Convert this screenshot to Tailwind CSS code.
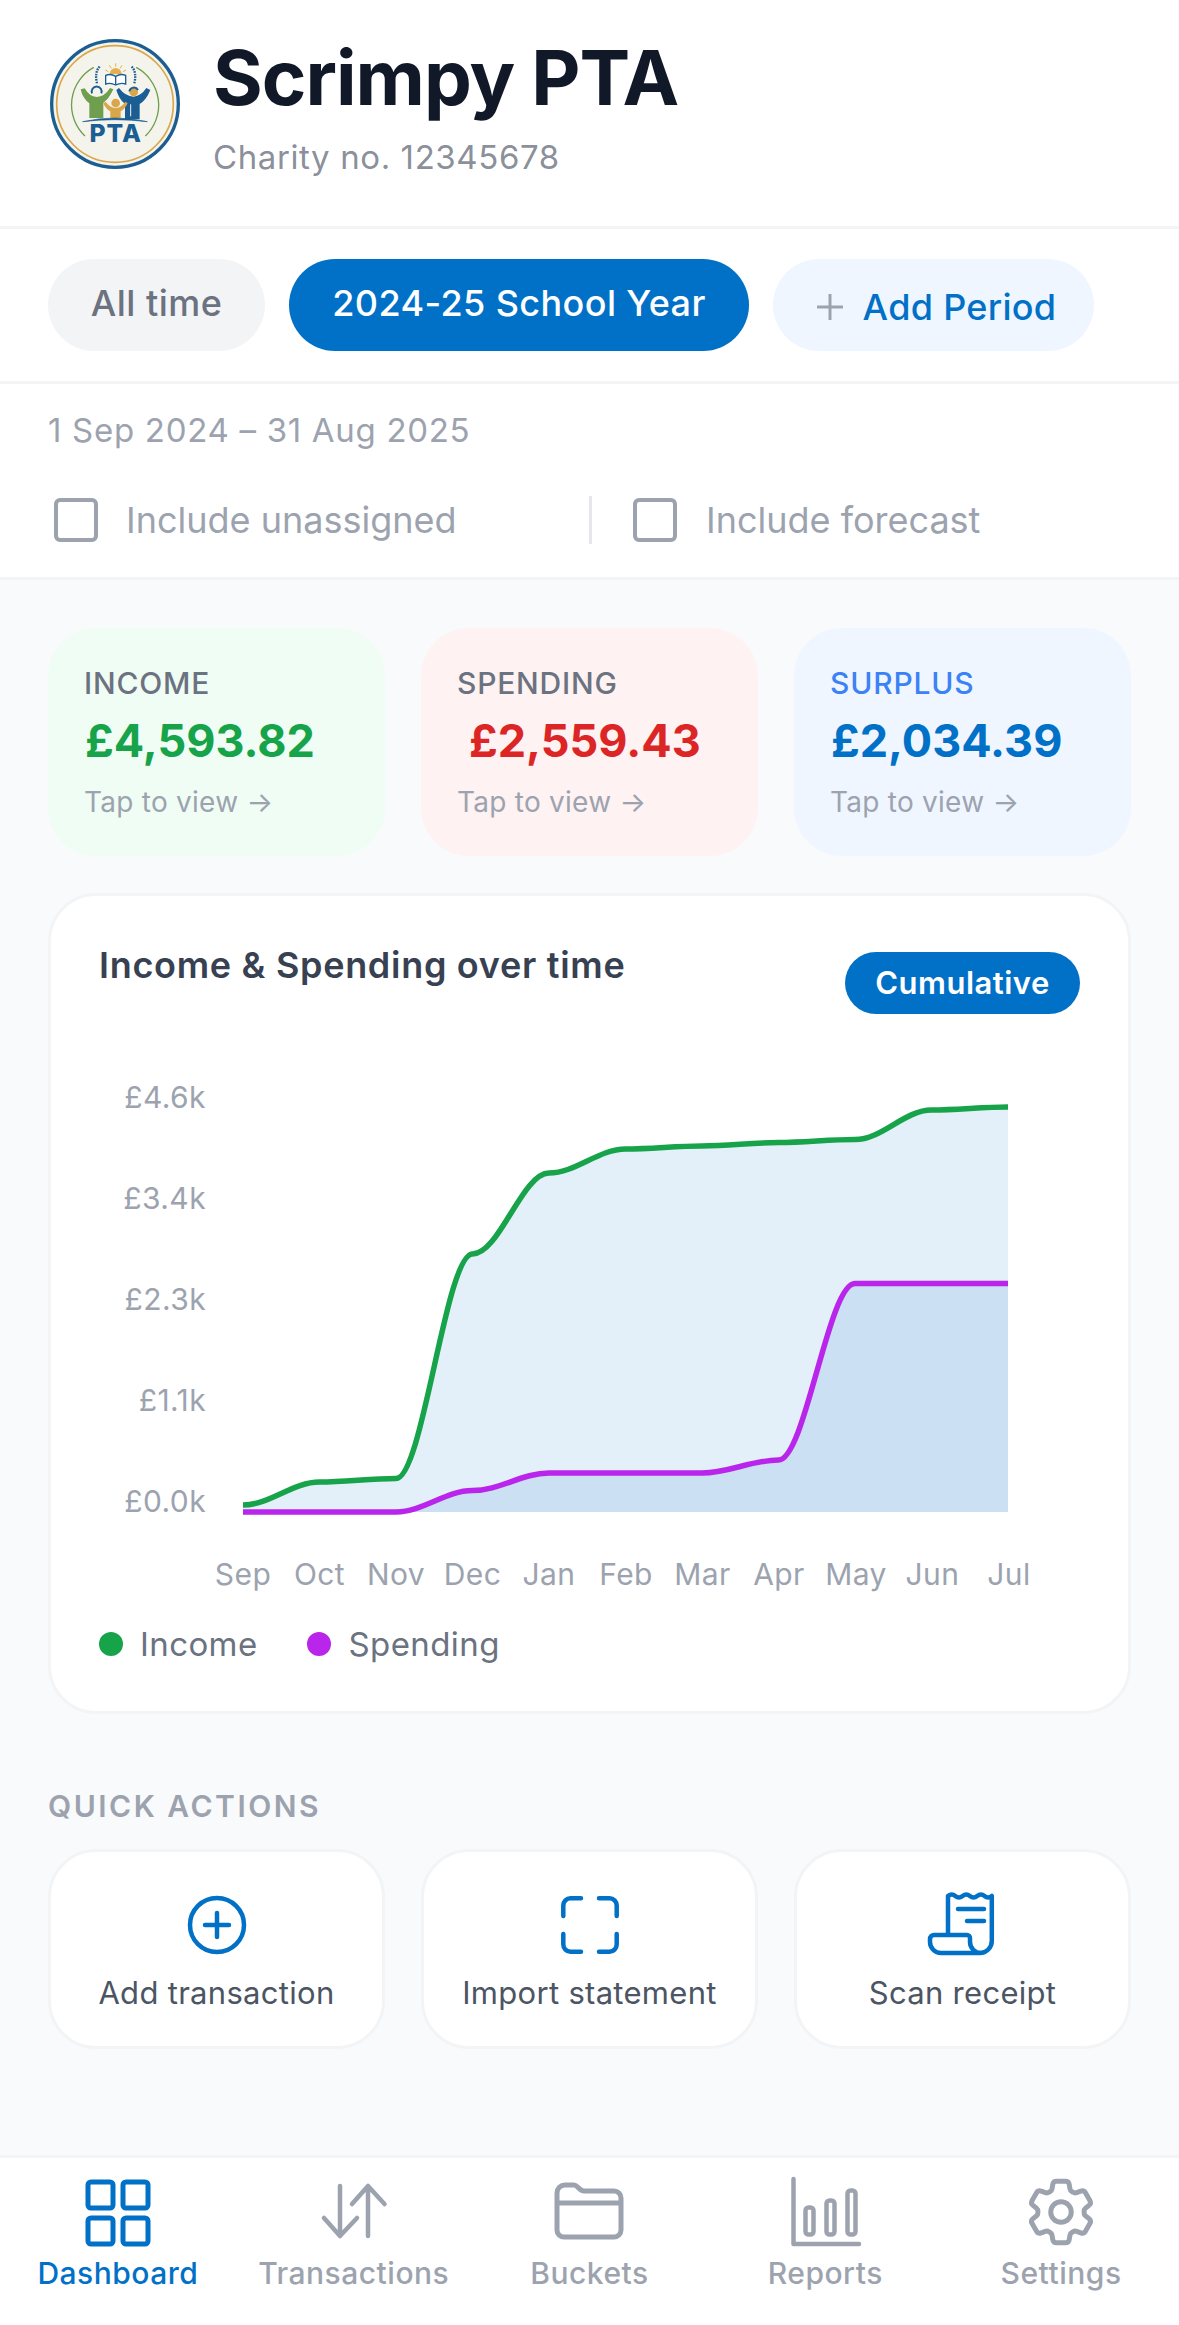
<!DOCTYPE html>
<html lang="en">
<head>
  <meta charset="UTF-8" />
  <meta name="viewport" content="width=device-width, initial-scale=1.0"/>
  <title>Dashboard | Scrimpy PTA</title>
  <script src="https://cdn.jsdelivr.net/npm/@tailwindcss/browser@4"></script>
</head>
<body class="bg-white font-[Inter,sans-serif]">
<div class="w-[1179px] h-[2325px] flex flex-col overflow-hidden bg-[#f9fafb]">

  <!-- header -->
  <header class="h-[229px] shrink-0 bg-white border-b-[3px] border-[#f3f4f6] pl-[50px] pt-[39px] flex items-start gap-[33px]">
    <svg class="w-[130px] h-[130px] shrink-0" viewBox="60 55 390 390">
      <circle cx="255" cy="250" r="190" fill="#f5f4ec" stroke="#1b5e93" stroke-width="10"/>
      <circle cx="255" cy="250" r="175" fill="none" stroke="#d9a74a" stroke-width="5"/>
      <path d="M190 141A128 128 0 0 0 164 345M320 141A128 128 0 0 1 347 345" fill="none" stroke="#6f9e4f" stroke-width="4" stroke-linecap="round"/>
      <path d="M239 160a18 18 0 0 1 36 0Z" fill="#e3b04f"/>
      <path d="M257 128v10M238 134l6 9M276 134l-6 9M226 148l9 5M288 148l-9 5" stroke="#e3b04f" stroke-width="3"/>
      <path d="M227 164q15-6 30 3q15-9 30-3v26q-15-5-30 3q-15-8-30-3ZM257 167v26" fill="#fff" stroke="#1b5e93" stroke-width="4"/>
      <path d="M209 138q-16 16-8 50M305 138q16 16 8 50" fill="none" stroke="#1b5e93" stroke-width="7" stroke-dasharray="5 3"/>
      <path d="M152 206l12-3q14 25 36 26q24-1 40-27l10 4q-14 30-30 40v46h-42v-44q-20-14-26-42Z" fill="#6f9e4f"/>
      <path d="M186 218a15 15 0 1 1 28 0" fill="none" stroke="#1b5e93" stroke-width="6"/>
      <path d="M259 208l8-6q20 26 44 26q22-2 38-26l12 6q-12 30-32 42v46h-44v-46q-18-14-26-42Z" fill="#1b5e93"/>
      <path d="M302 287v-36" stroke="#f5f4ec" stroke-width="3"/>
      <circle cx="311" cy="214" r="13" fill="#d9a74a"/>
      <path d="M298 212a14 14 0 0 1 26-4" fill="none" stroke="#1b5e93" stroke-width="6"/>
      <circle cx="257" cy="247" r="13" fill="#d9a74a"/>
      <path d="M220 248l7-5q12 18 30 19q18-1 29-19l7 5q-9 18-21 24v20h-31v-20q-14-7-21-24Z" fill="#d9a74a"/>
      <path d="M158 303q97-22 194 0q-97-12-194 0Z" fill="#1b5e93" stroke="#1b5e93" stroke-width="2"/>
      <text x="257" y="365" text-anchor="middle" font-family="Inter" font-weight="800" font-size="74" letter-spacing="3" fill="#1b5e93">PTA</text>
    </svg>
    <div class="flex flex-col">
      <h1 class="text-[76px] leading-[78px] font-bold tracking-[-1px] text-[#111827] mt-[-1px]">Scrimpy PTA</h1>
      <p class="text-[33px] leading-[40px] mt-[21px] text-[#6b7280]/80 tracking-[0.6px]">Charity no. 12345678</p>
    </div>
  </header>

  <!-- period pills -->
  <div class="h-[155px] shrink-0 bg-white border-b-[3px] border-[#f3f4f6] px-[48px] pt-[30px] flex items-start gap-[24px]">
    <button class="h-[92px] w-[217px] pb-[4px] rounded-full bg-[#f3f4f6] text-[36px] font-medium tracking-[0.5px] text-[#6b7280]">All time</button>
    <button class="h-[92px] w-[460px] pb-[4px] rounded-full bg-[#0170c7] text-[36px] font-medium tracking-[0.4px] text-white">2024-25 School Year</button>
    <button class="h-[92px] w-[321px] pl-[6px] rounded-full bg-[#eff6ff] text-[36px] font-medium tracking-[0.3px] text-[#0170c7] flex items-center justify-center gap-[20px] pt-[3px]">
      <svg class="w-[26px] h-[26px]" viewBox="0 0 26 26" fill="none" stroke="#9ca3af" stroke-width="3"><path d="M13 0v26M0 13h26"/></svg>
      Add Period
    </button>
  </div>

  <!-- date range + toggles -->
  <div class="h-[196px] shrink-0 bg-white border-b-[3px] border-[#f3f4f6] px-[48px]">
    <p class="text-[33px] leading-[40px] mt-[26px] text-[#9ca3af] tracking-[0.7px]">1 Sep 2024 – 31 Aug 2025</p>
    <div class="flex items-center mt-[43px]">
      <label class="w-[541px] flex items-center gap-[28px] pl-[6px] text-[36px] text-[#9ca3af]">
        <span class="w-[44px] h-[44px] rounded-[6px] border-[4px] border-[#9ca3af] bg-white"></span>
        Include unassigned
      </label>
      <span class="w-[3px] h-[48px] bg-[#e5e7eb]"></span>
      <label class="flex items-center gap-[29px] pl-[41px] text-[36px] text-[#9ca3af]">
        <span class="w-[44px] h-[44px] rounded-[6px] border-[4px] border-[#9ca3af] bg-white"></span>
        Include forecast
      </label>
    </div>
  </div>

  <main class="flex-1 px-[48px] pt-[48px]">
    <!-- summary cards -->
    <div class="grid grid-cols-3 gap-[36px]">
      <div class="h-[228px] rounded-[48px] bg-[#f0fdf4] pl-[36px] pt-[37px]">
        <p class="text-[30px] leading-[36px] font-medium tracking-[0.8px] text-[#6b7280]">INCOME</p>
        <p class="text-[45px] leading-[60px] font-bold text-[#16a34a] mt-[10px] ml-[1px]">£4,593.82</p>
        <p class="text-[28px] leading-[36px] tracking-[0.25px] text-[#9ca3af] mt-[13px]">Tap to view →</p>
      </div>
      <div class="h-[228px] rounded-[48px] bg-[#fef2f2] pl-[36px] pt-[37px]">
        <p class="text-[30px] leading-[36px] font-medium tracking-[0.8px] text-[#6b7280]">SPENDING</p>
        <p class="text-[45px] leading-[60px] font-bold text-[#dc2626] mt-[10px] ml-[12px]">£2,559.43</p>
        <p class="text-[28px] leading-[36px] tracking-[0.25px] text-[#9ca3af] mt-[13px]">Tap to view →</p>
      </div>
      <div class="h-[228px] rounded-[48px] bg-[#eff6ff] pl-[36px] pt-[37px]">
        <p class="text-[30px] leading-[36px] font-medium tracking-[0.8px] text-[#3b82f6]">SURPLUS</p>
        <p class="text-[45px] leading-[60px] font-bold text-[#0170c7] mt-[10px] ml-[1px]">£2,034.39</p>
        <p class="text-[28px] leading-[36px] tracking-[0.25px] text-[#9ca3af] mt-[13px]">Tap to view →</p>
      </div>
    </div>

    <!-- chart -->
    <section class="h-[821px] mt-[37px] rounded-[48px] bg-white border-[3px] border-[#f3f4f6] pt-[48px]">
      <div class="flex items-start justify-between pl-[48px] pr-[48px]">
        <h2 class="text-[36px] leading-[42px] font-semibold tracking-[0.7px] text-[#374151]">Income &amp; Spending over time</h2>
        <span class="mt-[8px] h-[62px] w-[235px] rounded-full bg-[#0170c7] text-white text-[31px] font-semibold tracking-[0.5px] flex items-center justify-center">Cumulative</span>
      </div>
      <svg class="block mt-[26px]" width="1077" height="570" viewBox="51 1040 1077 570" font-family="Inter" font-size="30" letter-spacing="0.4" fill="#9ca3af">
        <path id="income-fill" fill="#0170c7" fill-opacity="0.11"/>
        <path id="spending-fill" fill="#0170c7" fill-opacity="0.1"/>
        <path id="income-line" fill="none" stroke="#16a34a" stroke-width="5.5"/>
        <path id="spending-line" fill="none" stroke="#b925ea" stroke-width="5.5"/>
        <g text-anchor="end">
          <text x="206" y="1108">£4.6k</text>
          <text x="206" y="1209">£3.4k</text>
          <text x="206" y="1310">£2.3k</text>
          <text x="206" y="1411">£1.1k</text>
          <text x="206" y="1512">£0.0k</text>
        </g>
        <g text-anchor="middle">
          <text x="243" y="1585">Sep</text>
          <text x="319.5" y="1585">Oct</text>
          <text x="396" y="1585">Nov</text>
          <text x="472.5" y="1585">Dec</text>
          <text x="549" y="1585">Jan</text>
          <text x="626" y="1585">Feb</text>
          <text x="702.5" y="1585">Mar</text>
          <text x="779" y="1585">Apr</text>
          <text x="856" y="1585">May</text>
          <text x="932.5" y="1585">Jun</text>
          <text x="1009" y="1585">Jul</text>
        </g>
      </svg>
      <div class="flex items-center mt-[14px] pl-[48px] text-[33px] leading-[40px] tracking-[0.4px] text-[#6b7280]">
        <span class="w-[24px] h-[24px] rounded-full bg-[#16a34a]"></span>
        <span class="ml-[17px]">Income</span>
        <span class="w-[24px] h-[24px] rounded-full bg-[#b925ea] ml-[49px]"></span>
        <span class="ml-[18px]">Spending</span>
      </div>
    </section>

    <!-- quick actions -->
    <h3 class="text-[30px] leading-[36px] font-semibold tracking-[2.5px] text-[#9ca3af] mt-[74px]">QUICK ACTIONS</h3>
    <div class="grid grid-cols-3 gap-[36px] mt-[25px]">
      <button class="h-[200px] rounded-[48px] bg-white border-[3px] border-[#f3f4f6] flex flex-col items-center pt-[37px]">
        <svg class="w-[72px] h-[72px]" viewBox="0 0 24 24" fill="none" stroke="#0170c7" stroke-width="1.5" stroke-linecap="round"><circle cx="12" cy="12" r="9"/><path d="M12 8v8M8 12h8"/></svg>
        <span class="text-[31px] leading-[40px] tracking-[0.3px] text-[#4b5563] mt-[12px]">Add transaction</span>
      </button>
      <button class="h-[200px] rounded-[48px] bg-white border-[3px] border-[#f3f4f6] flex flex-col items-center pt-[37px]">
        <svg class="w-[72px] h-[72px]" viewBox="0 0 24 24" fill="none" stroke="#0170c7" stroke-width="1.5" stroke-linecap="round"><path d="M9 3.1H5.5A2.4 2.4 0 0 0 3.1 5.5V9M15 3.1h3.5a2.4 2.4 0 0 1 2.4 2.4V9M20.9 15v3.5a2.4 2.4 0 0 1-2.4 2.4H15M9 20.9H5.5a2.4 2.4 0 0 1-2.4-2.4V15"/></svg>
        <span class="text-[31px] leading-[40px] tracking-[0.3px] text-[#4b5563] mt-[12px]">Import statement</span>
      </button>
      <button class="h-[200px] rounded-[48px] bg-white border-[3px] border-[#f3f4f6] flex flex-col items-center pt-[37px]">
        <svg class="w-[72px] h-[72px]" viewBox="0 0 72 72" fill="none" stroke="#0170c7" stroke-width="4.5" stroke-linecap="round" stroke-linejoin="round"><path d="M21 46V7q3.7-3 7.3 0t7.3 0t7.3 0t7.3 0t7.3 0t7.3 0V52a12 12 0 0 1-12 12H14A11 11 0 0 1 3 53V50a4 4 0 0 1 4-4H40a3 3 0 0 1 3 3V53a11 11 0 0 0 11 11M31 20H57M40 32H57"/></svg>
        <span class="text-[31px] leading-[40px] tracking-[0.3px] text-[#4b5563] mt-[12px]">Scan receipt</span>
      </button>
    </div>
  </main>

  <!-- bottom nav -->
  <nav class="h-[170px] shrink-0 bg-white border-t-[3px] border-[#f3f4f6] grid grid-cols-5 text-[30px] leading-[36px] font-medium tracking-[0.5px] text-[#9ca3af]">
    <a class="flex flex-col items-center pt-[15px] text-[#0170c7]">
      <svg class="w-[78px] h-[78px]" viewBox="0 0 78 78" fill="none" stroke="#0170c7" stroke-width="5"><rect x="9" y="9" width="25" height="26" rx="3"/><rect x="44" y="9" width="25" height="26" rx="3"/><rect x="9" y="45" width="25" height="26" rx="3"/><rect x="44" y="45" width="25" height="26" rx="3"/></svg>
      <span class="mt-[4px]">Dashboard</span>
    </a>
    <a class="flex flex-col items-center pt-[15px]">
      <svg class="w-[78px] h-[78px]" viewBox="0 0 78 78" fill="none" stroke="#9ca3af" stroke-width="4.5" stroke-linecap="round" stroke-linejoin="round"><path d="M25 13V63M9 45L25 63L42 45M53 63V13M37 31L53 13L69.5 31"/></svg>
      <span class="mt-[4px]">Transactions</span>
    </a>
    <a class="flex flex-col items-center pt-[15px]">
      <svg class="w-[78px] h-[78px]" viewBox="0 0 78 78" fill="none" stroke="#9ca3af" stroke-width="5"><path d="M7 20a8 8 0 0 1 8-8H24c4 0 5 6 10 6H64a7 7 0 0 1 7 7V57a7 7 0 0 1-7 7H14a7 7 0 0 1-7-7ZM7 30H71"/></svg>
      <span class="mt-[4px]">Buckets</span>
    </a>
    <a class="flex flex-col items-center pt-[15px]">
      <svg class="w-[78px] h-[78px]" viewBox="0 0 78 78" fill="none" stroke="#9ca3af" stroke-width="4.5" stroke-linecap="round" stroke-linejoin="round"><path d="M7.5 6V71H73"/><rect x="19.5" y="34.5" width="8" height="27" rx="3"/><rect x="40.5" y="27.5" width="8" height="34" rx="3"/><rect x="61.5" y="17.5" width="8" height="44" rx="3"/></svg>
      <span class="mt-[4px]">Reports</span>
    </a>
    <a class="flex flex-col items-center pt-[15px]">
      <svg class="w-[78px] h-[78px]" viewBox="0.6 0.6 22.8 22.8" fill="none" stroke="#9ca3af" stroke-width="1.45" stroke-linecap="round" stroke-linejoin="round"><path d="M9.594 3.94c.09-.542.56-.94 1.11-.94h2.593c.55 0 1.02.398 1.11.94l.213 1.281c.063.374.313.686.645.87.074.04.147.083.22.127.325.196.72.257 1.075.124l1.217-.456a1.125 1.125 0 0 1 1.37.49l1.296 2.247a1.125 1.125 0 0 1-.26 1.431l-1.003.827c-.293.241-.438.613-.43.992a7.723 7.723 0 0 1 0 .255c-.008.378.137.75.43.991l1.004.827c.424.35.534.955.26 1.43l-1.298 2.247a1.125 1.125 0 0 1-1.369.491l-1.217-.456c-.355-.133-.75-.072-1.076.124a6.47 6.47 0 0 1-.22.128c-.331.183-.581.495-.644.869l-.213 1.281c-.09.543-.56.94-1.11.94h-2.594c-.55 0-1.019-.398-1.11-.94l-.213-1.281c-.062-.374-.312-.686-.644-.87a6.52 6.52 0 0 1-.22-.127c-.325-.196-.72-.257-1.076-.124l-1.217.456a1.125 1.125 0 0 1-1.369-.49l-1.297-2.247a1.125 1.125 0 0 1 .26-1.431l1.004-.827c.292-.24.437-.613.43-.991a6.932 6.932 0 0 1 0-.255c.007-.38-.138-.751-.43-.992l-1.004-.827a1.125 1.125 0 0 1-.26-1.43l1.297-2.247a1.125 1.125 0 0 1 1.37-.491l1.216.456c.356.133.751.072 1.076-.124.072-.044.146-.086.22-.128.332-.183.582-.495.644-.869l.214-1.28Z"/><path d="M15 12a3 3 0 1 1-6 0 3 3 0 0 1 6 0Z"/></svg>
      <span class="mt-[4px]">Settings</span>
    </a>
  </nav>
</div>

<script>
  // cumulative values as pixel y, one per month
  const income = [1505, 1482, 1478.5, 1254, 1173, 1149, 1146, 1142.6, 1139.6, 1110, 1107];
  const spending = [1512, 1512, 1512, 1490.6, 1473, 1473, 1473, 1460, 1283.6, 1283.6, 1283.6];
  const startX = 243, step = 76.5, baseY = 1512;

  function curve(ys) {
    let d = `M${startX} ${ys[0]}`;
    for (let i = 1; i < ys.length; i++) {
      const x0 = startX + (i - 1) * step, x1 = startX + i * step;
      d += `C${x0 + step * 0.35} ${ys[i - 1]} ${x1 - step * 0.35} ${ys[i]} ${x1} ${ys[i]}`;
    }
    return d;
  }

  document.getElementById("income-line").setAttribute("d", curve(income));
  document.getElementById("spending-line").setAttribute("d", curve(spending));
  document.getElementById("income-fill").setAttribute("d", curve(income) + `V${baseY}H${startX}Z`);
  document.getElementById("spending-fill").setAttribute("d", curve(spending) + `V${baseY}H${startX}Z`);
</script>
</body>
</html>
